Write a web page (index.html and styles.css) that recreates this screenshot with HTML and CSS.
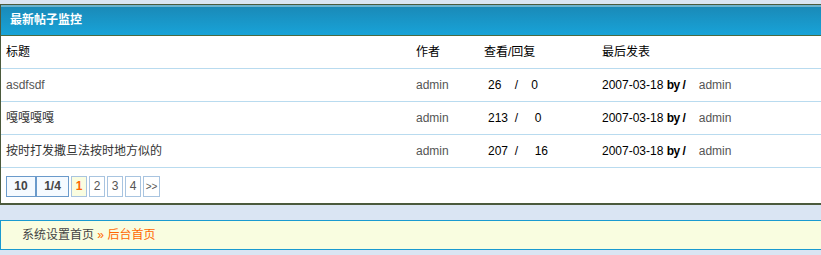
FILE: index.html
```html
<!DOCTYPE html>
<html>
<head>
<meta charset="utf-8">
<link rel="stylesheet" href="styles.css">
</head>
<body>
<div class="page">
  <div class="panel">
    <div class="panel-head">最新帖子监控</div>
    <div class="row head-row">
      <div>标题</div><div>作者</div><div>查看/回复</div><div>最后发表</div>
    </div>
    <div class="row">
      <div class="title">asdfsdf</div>
      <div class="user">admin</div>
      <div class="stat">26    /    0</div>
      <div class="last">2007-03-18 <b>by /</b> <span class="user by">admin</span></div>
    </div>
    <div class="row">
      <div class="title dark">嘎嘎嘎嘎</div>
      <div class="user">admin</div>
      <div class="stat">213  /     0</div>
      <div class="last">2007-03-18 <b>by /</b> <span class="user by">admin</span></div>
    </div>
    <div class="row">
      <div class="title dark">按时打发撒旦法按时地方似的</div>
      <div class="user">admin</div>
      <div class="stat">207  /     16</div>
      <div class="last">2007-03-18 <b>by /</b> <span class="user by">admin</span></div>
    </div>
    <div class="pager">
      <span class="pg info">10</span><span class="pg info">1/4</span>
      <span class="pg cur">1</span><span class="pg">2</span><span class="pg">3</span><span class="pg">4</span><span class="pg">&gt;&gt;</span>
    </div>
  </div>
  <div class="crumb">系统设置首页 <span class="arrow">»</span> <span class="here">后台首页</span></div>
</div>
</body>
</html>
```
FILE: styles.css
```css
html, body { margin: 0; padding: 0; overflow: hidden; }
body {
  background: #dae5f3;
  font-family: "Liberation Sans", "Noto Sans CJK SC", sans-serif;
  font-size: 12px;
  color: #000;
}
.page { width: 860px; padding-top: 4px; }
.panel {
  background: #fff;
  border: 1px solid #4b5a3c;
  border-bottom-width: 2px;
}
.panel-head {
  height: 28px;
  line-height: 27px;
  border-top: 2px solid #6cb3cf;
  border-bottom: 1px solid #4b6a40;
  background: linear-gradient(#1a8ab8, #18a3d8);
  color: #fff;
  font-weight: bold;
  padding-left: 9px;
}
.row {
  display: grid;
  grid-template-columns: 410px 68px 118px 1fr;
  height: 32px;
  line-height: 32px;
  border-bottom: 1px solid #b9dbef;
  padding-left: 5px;
}
.head-row { color: #000; }
.title { color: #555; }
.title.dark { color: #333; }
.user { color: #555; }
.stat { padding-left: 4px; white-space: pre; }
.last b { letter-spacing: -0.5px; }
.by { margin-left: 10px; }
.pager {
  display: flex;
  gap: 2px;
  padding: 8px 0 6px 5px;
}
.pg {
  height: 19px;
  line-height: 19px;
  min-width: 14px;
  text-align: center;
  border: 1px solid #a8c4e0;
  color: #555;
  background: #fff;
}
.pg.info {
  border-color: #6a9acb;
  background: #f5faff;
  font-weight: bold;
  color: #444;
  min-width: 28px;
  margin-right: -2px;
}
.pg.info + .pg.info { min-width: 31px; border-left: 1px solid #6a9acb; margin-right: 0; }
.pg.cur { background: #fafde0; color: #ff6600; font-weight: bold; }
.pg:last-child { min-width: 15px; font-size: 10px; }
.crumb {
  margin-top: 15px;
  height: 28px;
  line-height: 28px;
  border: 1px solid #1a9ad0;
  background: #f9fde0;
  padding-left: 21px;
  color: #444;
}
.arrow { color: #ff6600; }
.here { color: #ff6600; }
```
